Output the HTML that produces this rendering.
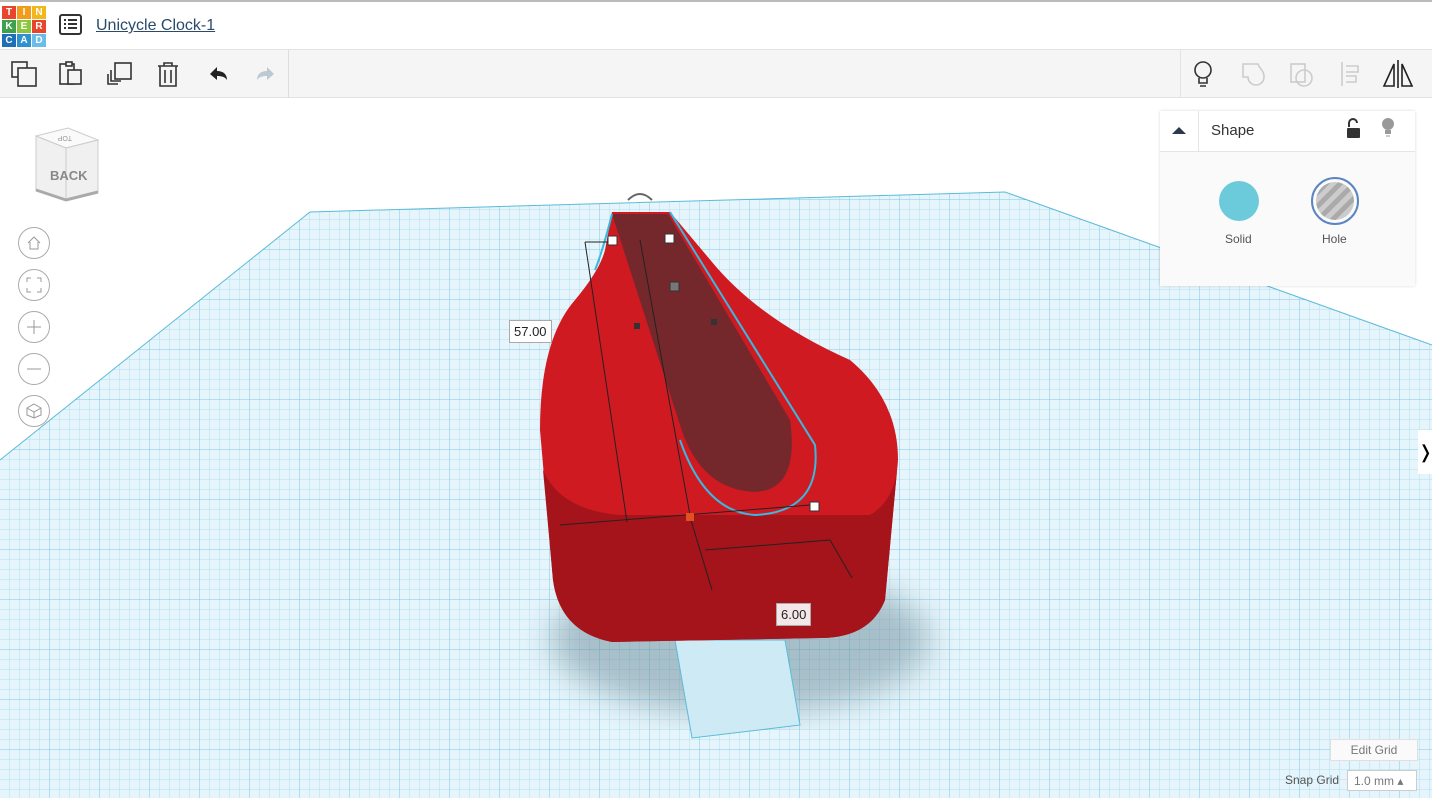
<!DOCTYPE html>
<html><head><style>
body{margin:0;width:1432px;height:798px;overflow:hidden;font-family:"Liberation Sans",sans-serif;background:#fff;position:relative}
.top{position:absolute;left:0;top:0;width:1432px;height:50px;background:#fff;border-top:2px solid #bbb;border-bottom:1px solid #e3e3e3;box-sizing:border-box}
.tb{position:absolute;left:0;top:50px;width:1432px;height:48px;background:#f5f5f5;border-bottom:1px solid #e3e3e3;box-sizing:border-box}
.logo{position:absolute;left:2px;top:4px;display:grid;grid-template-columns:repeat(3,14px);grid-gap:1px}
.logo span{width:14px;height:13px;color:#fff;font-size:10px;font-weight:bold;text-align:center;line-height:13px}
.title{position:absolute;left:96px;top:15px;font-size:16px;color:#2a4a6a;text-decoration:underline}
.panel{position:absolute;left:1160px;top:111px;width:255px;height:175px;background:#fafafa;box-shadow:0 0 3px rgba(0,0,0,.15)}
.lbl{position:absolute;background:#fff;border:1px solid #aaa;font-size:13px;padding:3px 4px;color:#222}
.navb{position:absolute;left:18px;width:32px;height:32px;border:1px solid #aaa;border-radius:50%;box-sizing:border-box;background:#fff}
.navb svg{position:absolute;left:7px;top:7px}
</style></head><body>
<svg width="1432" height="798" style="position:absolute;left:0;top:0">
<defs>
<pattern id="g" width="10" height="10" patternUnits="userSpaceOnUse"><rect width="10" height="10" fill="#e6f5fb"/><path d="M10 0V10M0 10H10" stroke="#b3def0" stroke-width="1"/></pattern>
<pattern id="g2" width="50" height="50" patternUnits="userSpaceOnUse"><path d="M50 0V50M0 50H50" stroke="#7cc8e4" stroke-width="1"/></pattern>
<filter id="b"><feGaussianBlur stdDeviation="16"/></filter>
</defs>
<polygon points="310,212 1005,192 1432,345 1432,798 0,798 0,460" fill="url(#g)"/>
<polygon points="310,212 1005,192 1432,345 1432,798 0,798 0,460" fill="url(#g2)"/>
<polyline points="0,460 310,212 1005,192 1432,345" fill="none" stroke="#5bbbd8"/>
<ellipse cx="740" cy="640" rx="190" ry="75" fill="#6a8a98" opacity=".5" filter="url(#b)"/>
<polygon points="675,640 785,640 800,725 692,738" fill="#cdeaf5" stroke="#5bbbd8"/>
<path d="M612,212 L670,212 L712,262 Q760,320 850,360 Q898,400 898,460 L885,600 Q870,638 820,638 L612,642 Q560,632 553,580 L540,430 Q540,340 575,300 Q600,270 605,250 Z" fill="#d01a22"/>
<path d="M543,470 Q560,510 620,515 L870,515 Q896,500 898,460 L885,600 Q870,638 820,638 L612,642 Q560,632 553,580 Z" fill="#a5141b"/>
<path d="M612,214 L668,214 L790,420 Q800,490 755,492 Q700,490 680,425 Z" fill="#6a2a2c" opacity=".9"/>
<path d="M670,212 L815,445 Q822,512 755,515 Q705,512 680,440" fill="none" stroke="#3ab8e0" stroke-width="2"/>
<path d="M612,214 Q603,250 595,270" fill="none" stroke="#3ab8e0" stroke-width="2"/>
<path d="M585,242 L627,522 M560,525 L810,505 M690,517 L712,590 M705,550 L830,540 M830,540 L852,578 M640,240 L690,515 M585,242 L612,242" stroke="#222" fill="none"/>
<path d="M628,200 Q640,188 652,200" fill="none" stroke="#666" stroke-width="2"/>
<rect x="608" y="236" width="9" height="9" fill="#fff" stroke="#333"/><rect x="665" y="234" width="9" height="9" fill="#fff" stroke="#333"/>
<rect x="810" y="502" width="9" height="9" fill="#fff" stroke="#333"/><rect x="686" y="513" width="8" height="8" fill="#e25020"/>
<rect x="670" y="282" width="9" height="9" fill="#777" stroke="#333"/>
<rect x="634" y="323" width="6" height="6" fill="#333"/><rect x="711" y="319" width="6" height="6" fill="#333"/>
</svg>
<div class="top"><div class="logo">
<span style="background:#e8452c">T</span><span style="background:#f39b1d">I</span><span style="background:#f3b71d">N</span>
<span style="background:#40a14c">K</span><span style="background:#8cc63f">E</span><span style="background:#e8452c">R</span>
<span style="background:#1d6fb7">C</span><span style="background:#2f92d0">A</span><span style="background:#6bbde8">D</span></div>
<svg style="position:absolute;left:59px;top:12px" width="24" height="22"><rect x="1" y="1" width="21" height="19" rx="2" fill="none" stroke="#333" stroke-width="2"/><path d="M5 6h2M9 6h9M5 10h2M9 10h9M5 14h2M9 14h9" stroke="#333" stroke-width="2"/></svg>
<div class="title">Unicycle Clock-1</div></div>
<div class="tb">
<svg width="1432" height="48" style="position:absolute;left:0;top:0" fill="none" stroke="#333" stroke-width="1.6">
<rect x="12" y="12" width="15" height="15"/><rect x="18" y="18" width="18" height="18" fill="#f5f5f5"/>
<rect x="60" y="14" width="14" height="20"/><rect x="66" y="12" width="6" height="4" fill="#f5f5f5"/><rect x="68" y="20" width="13" height="14" fill="#f5f5f5"/>
<path d="M108 24v10h10M111 20v11h10"/><rect x="115" y="13" width="16" height="16" fill="#f5f5f5"/>
<path d="M158 16h20M164 16v-3h8v3M160 16v20h16V16M165 20v13M171 20v13"/>
<path d="M210 24l7-7v4c6 0 10 3 10 9c-2-3-5-4-10-4v4z" fill="#222" stroke="none"/>
<path d="M274 24l-7-7v4c-6 0-10 3-10 9c2-3 5-4 10-4v4z" fill="#bcc9d3" stroke="none"/>
<circle cx="1203" cy="20" r="8"/><path d="M1199 28v5h8v-5M1200 36h6"/>
<path d="M1243 14h15c2 6 6 6 6 13a8 8 0 0 1-16 0h-5z" stroke="#ccc"/>
<rect x="1291" y="14" width="14" height="18" stroke="#ccc"/><circle cx="1304" cy="28" r="8" stroke="#ccc"/>
<path d="M1342 12v24M1346 16h12v6h-12M1346 26h10v6h-10" stroke="#ccc"/>
<path d="M1398 10v28M1394 36l-10 0l10-22zM1402 36h10l-10-22z" stroke="#222"/>
</svg>
<div style="position:absolute;left:288px;top:0;width:1px;height:48px;background:#ddd"></div>
<div style="position:absolute;left:1180px;top:0;width:1px;height:48px;background:#e3e3e3"></div>
</div>
<svg style="position:absolute;left:30px;top:122px" width="75" height="85"><path d="M6 14L38 6L68 18L36 26Z" fill="#fafafa" stroke="#ccc"/><path d="M6 14L36 26L36 78L6 68Z M36 26L68 18L68 70L36 78Z" fill="#f0f0f0" stroke="#ccc"/><path d="M6 68L36 78L68 70" stroke="#aaa" stroke-width="3" fill="none"/><text x="20" y="58" font-size="13" font-weight="bold" fill="#888" font-family="Liberation Sans">BACK</text><text x="24" y="18" font-size="7" fill="#999" font-family="Liberation Sans" transform="rotate(180 33 16)">TOP</text></svg>
<div class="navb" style="top:227px"><svg width="16" height="16" fill="none" stroke="#999"><path d="M2 8L8 2L14 8M4 7v7h8V7"/></svg></div>
<div class="navb" style="top:269px"><svg width="16" height="16" fill="none" stroke="#999"><path d="M1 5V1h4M11 1h4v4M15 11v4h-4M5 15H1v-4"/></svg></div>
<div class="navb" style="top:311px"><svg width="16" height="16" fill="none" stroke="#999"><path d="M8 1v14M1 8h14"/></svg></div>
<div class="navb" style="top:353px"><svg width="16" height="16" fill="none" stroke="#999"><path d="M1 8h14"/></svg></div>
<div class="navb" style="top:395px"><svg width="16" height="16" fill="none" stroke="#999"><path d="M8 1L15 5V12L8 15L1 12V5Z M1 5L8 9L15 5M8 9V15"/></svg></div>
<div class="panel">
<div style="height:40px;border-bottom:1px solid #e5e5e5;background:#fff;position:relative">
<svg style="position:absolute;left:12px;top:14px" width="14" height="10"><path d="M0 9L7 2L14 9Z" fill="#2a3a4a"/></svg>
<div style="position:absolute;left:38px;top:0;width:1px;height:40px;background:#e5e5e5"></div>
<span style="position:absolute;left:51px;top:11px;font-size:15px;color:#333">Shape</span>
<svg style="position:absolute;left:186px;top:6px" width="16" height="22"><path d="M3 10V6a4 4 0 0 1 8 0" fill="none" stroke="#333" stroke-width="2"/><rect x="1" y="11" width="13" height="10" rx="1" fill="#333"/></svg>
<svg style="position:absolute;left:220px;top:6px" width="16" height="22"><circle cx="8" cy="7" r="6" fill="#999"/><path d="M5 13h6v4h-6z" fill="#999"/><path d="M6 19h4" stroke="#999"/></svg></div>
<div style="position:absolute;left:59px;top:70px;width:40px;height:40px;border-radius:50%;background:#6ccbdb"></div>
<div style="position:absolute;left:151px;top:66px;width:48px;height:48px;border-radius:50%;border:2px solid #5a85c0;box-sizing:border-box;background:repeating-linear-gradient(135deg,#aaa 0 5px,#ccc 5px 10px);background-clip:content-box;padding:3px"></div>
<span style="position:absolute;left:65px;top:121px;font-size:12px;color:#555">Solid</span>
<span style="position:absolute;left:162px;top:121px;font-size:12px;color:#555">Hole</span>
</div>
<div class="lbl" style="left:509px;top:320px">57.00</div>
<div class="lbl" style="left:776px;top:603px;background:#f4e7e8">6.00</div>
<div style="position:absolute;left:1418px;top:430px;width:14px;height:44px;background:#fff;font-size:18px;line-height:44px">❭</div>
<div style="position:absolute;left:1330px;top:739px;width:86px;height:20px;border:1px solid #e0e0e0;font-size:12px;color:#777;text-align:center;line-height:20px;background:#fafafa">Edit Grid</div>
<div style="position:absolute;left:1285px;top:773px;font-size:12px;color:#555">Snap Grid</div>
<div style="position:absolute;left:1347px;top:770px;width:70px;height:21px;border:1px solid #ccc;background:#fff;font-size:12px;color:#777;line-height:21px;padding-left:6px;box-sizing:border-box">1.0 mm ▴</div>
</body></html>
